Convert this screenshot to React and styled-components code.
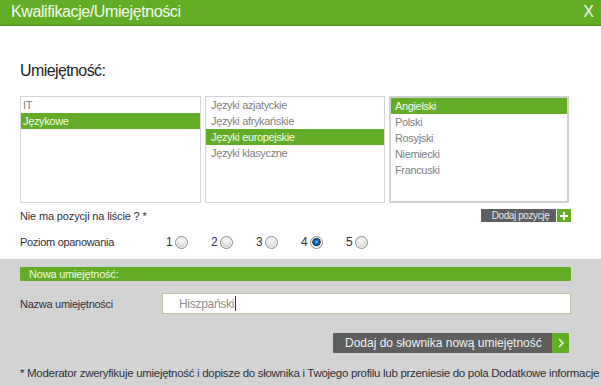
import React from "react";
import styled, { createGlobalStyle } from "styled-components";

const GlobalStyle = createGlobalStyle`
  html, body { margin: 0; padding: 0; background: #ffffff; }
  body { font-family: "Liberation Sans", Arial, sans-serif; }
  * { box-sizing: border-box; }
`;

const Dialog = styled.div`
  width: 601px;
  height: 386px;
  display: flex;
  flex-direction: column;
  overflow: hidden;
  background: #fff;
`;

const Header = styled.div`
  height: 26px;
  flex: none;
  background: #63ad26;
  border-bottom: 1px solid #4e8d1d;
  display: flex;
  align-items: center;
  justify-content: space-between;
  padding: 0 7px 1px 11px;
  color: #f3faec;
  font-size: 16px;
  letter-spacing: -0.4px;
`;

const Close = styled.span`
  font-size: 16px;
  letter-spacing: 0;
  cursor: pointer;
`;

const Top = styled.div`
  padding: 34px 31px 0 20px;
  height: 233px;
  flex: none;
`;

const Heading = styled.h2`
  margin: 0;
  font-weight: normal;
  font-size: 16px;
  line-height: 21px;
  letter-spacing: -0.6px;
  color: #222;
`;

const Lists = styled.div`
  margin-top: 15px;
  display: grid;
  grid-template-columns: 181px 180px 180px;
  gap: 4px;
`;

const ListBox = styled.div`
  height: 107px;
  border: ${(p) => (p.$focused ? "2px solid #d0d0d0" : "1px solid #d2d2d2")};
  background: #fff;
`;

const Item = styled.div`
  height: 16px;
  line-height: 16px;
  font-size: 11px;
  letter-spacing: -0.35px;
  padding-left: ${(p) => p.$pad}px;
  color: ${(p) => (p.$selected ? "#f4fbea" : "#808080")};
  background: ${(p) => (p.$selected ? "#63ad26" : "transparent")};
  white-space: nowrap;
`;

const PositionRow = styled.div`
  margin-top: 6px;
  height: 13px;
  display: flex;
  align-items: center;
  justify-content: space-between;
  margin-right: -1px;
`;

const Label = styled.span`
  font-size: 11px;
  letter-spacing: ${(p) => p.$ls ?? "-0.2px"};
  color: #2f2f3a;
  white-space: nowrap;
`;

const SmallButton = styled.button`
  all: unset;
  display: flex;
  height: 13px;
  cursor: pointer;
`;

const SmallButtonText = styled.span`
  width: 75px;
  background: #5f5f5f;
  color: #dfe8f2;
  font-size: 10px;
  letter-spacing: -0.4px;
  line-height: 13px;
  text-align: center;
  padding-left: 4px;
`;

const PlusBox = styled.span`
  width: 14px;
  margin-left: 1px;
  background: #63ad26;
  display: flex;
  align-items: center;
  justify-content: center;
`;

const LevelRow = styled.div`
  margin-top: 11px;
  height: 18px;
  display: flex;
  align-items: center;
`;

const LevelLabel = styled(Label)`
  width: 146px;
`;

const Option = styled.label`
  width: 45px;
  display: flex;
  align-items: center;
  font-size: 12px;
  color: #2f2f3a;
  cursor: pointer;
`;

const RadioDot = styled.span`
  width: 13px;
  height: 13px;
  margin-left: 2px;
  border-radius: 50%;
  border: 1px solid #8c8c8c;
  background: ${(p) =>
    p.$checked
      ? "radial-gradient(circle at 50% 45%, #7cc4ff 0, #1f78c8 1.6px, #0c4a86 3.3px, #2a2a2a 3.9px, #f2f2f2 4.6px, #d0d0d0 100%)"
      : "radial-gradient(circle at 50% 35%, #fafafa 0, #e6e6e6 40%, #c4c4c4 100%)"};
  box-shadow: inset 0 0 0 1px rgba(255, 255, 255, 0.7);
`;

const Bottom = styled.div`
  flex: 1;
  background: #d3d3d3;
  padding: 8px 30px 0 20px;
`;

const Bar = styled.div`
  height: 14px;
  background: #63ad26;
  color: #eef8e2;
  font-size: 11px;
  letter-spacing: -0.2px;
  line-height: 14px;
  padding-left: 9px;
`;

const NameRow = styled.div`
  margin-top: 12px;
  display: flex;
  align-items: center;
`;

const NameLabel = styled(Label)`
  width: 142px;
`;

const Field = styled.div`
  flex: 1;
  height: 21px;
  background: #fff;
  border: 1px solid #c6bba6;
  display: flex;
  align-items: center;
  padding-left: 16px;
  font-size: 12px;
  letter-spacing: -0.3px;
  color: #8d8d8d;
`;

const Caret = styled.span`
  width: 1px;
  height: 15px;
  margin-left: 1px;
  background: #333;
`;

const ButtonRow = styled.div`
  margin-top: 19px;
  display: flex;
  justify-content: flex-end;
  padding-right: 2px;
`;

const BigButton = styled.button`
  all: unset;
  display: flex;
  height: 20px;
  cursor: pointer;
`;

const BigButtonText = styled.span`
  width: 219px;
  background: #5e5e5e;
  color: #eef2f6;
  font-size: 12px;
  line-height: 20px;
  padding-left: 12px;
`;

const ArrowBox = styled.span`
  width: 17px;
  background: #63ad26;
  display: flex;
  align-items: center;
  justify-content: center;
`;

const Footnote = styled.p`
  margin: 13px -30px 0 0;
  font-size: 11.5px;
  line-height: 14px;
  letter-spacing: -0.3px;
  color: #2f2f3a;
  white-space: nowrap;
`;

const lists = [
  { pad: 2, items: ["IT", "Językowe"], sel: 1 },
  {
    pad: 5,
    items: ["Języki azjatyckie", "Języki afrykańskie", "Języki europejskie", "Języki klasyczne"],
    sel: 2,
  },
  { pad: 4, items: ["Angielski", "Polski", "Rosyjski", "Niemiecki", "Francuski"], sel: 0, focused: true },
];

export default function App() {
  return (
    <>
      <GlobalStyle />
      <Dialog>
        <Header>
          <span>Kwalifikacje/Umiejętności</span>
          <Close>X</Close>
        </Header>
        <Top>
          <Heading>Umiejętność:</Heading>
          <Lists>
            {lists.map((l, i) => (
              <ListBox key={i} $focused={l.focused}>
                {l.items.map((t, j) => (
                  <Item key={t} $pad={l.pad} $selected={j === l.sel}>
                    {t}
                  </Item>
                ))}
              </ListBox>
            ))}
          </Lists>
          <PositionRow>
            <Label $ls="-0.15px">Nie ma pozycji na liście ? *</Label>
            <SmallButton>
              <SmallButtonText>Dodaj pozycję</SmallButtonText>
              <PlusBox>
                <svg width="10" height="10" viewBox="0 0 10 10">
                  <path d="M5 1v8M1 5h8" stroke="#f4fbea" strokeWidth="2.2" />
                </svg>
              </PlusBox>
            </SmallButton>
          </PositionRow>
          <LevelRow>
            <LevelLabel $ls="-0.3px">Poziom opanowania</LevelLabel>
            {[1, 2, 3, 4, 5].map((n) => (
              <Option key={n}>
                {n}
                <RadioDot $checked={n === 4} />
              </Option>
            ))}
          </LevelRow>
        </Top>
        <Bottom>
          <Bar>Nowa umiejętność:</Bar>
          <NameRow>
            <NameLabel $ls="-0.27px">Nazwa umiejętności</NameLabel>
            <Field>
              Hiszpański
              <Caret />
            </Field>
          </NameRow>
          <ButtonRow>
            <BigButton>
              <BigButtonText>Dodaj do słownika nową umiejętność</BigButtonText>
              <ArrowBox>
                <svg width="8" height="12" viewBox="0 0 8 12">
                  <path d="M2 2l4 4-4 4" stroke="#e9f6da" strokeWidth="1.6" fill="none" />
                </svg>
              </ArrowBox>
            </BigButton>
          </ButtonRow>
          <Footnote>
            * Moderator zweryfikuje umiejętność i dopisze do słownika i Twojego profilu lub przeniesie do pola Dodatkowe informacje
          </Footnote>
        </Bottom>
      </Dialog>
    </>
  );
}
